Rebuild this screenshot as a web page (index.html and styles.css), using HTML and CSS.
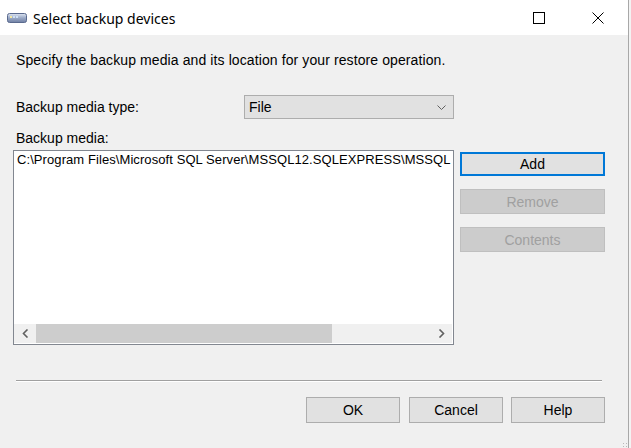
FILE: index.html
```html
<!DOCTYPE html>
<html>
<head>
<meta charset="utf-8">
<link rel="stylesheet" href="styles.css">
</head>
<body>
<div class="screen">
  <div class="dialog">
    <div class="titlebar">
      <svg class="app-icon" width="20" height="10" viewBox="0 0 20 10">
        <defs>
          <linearGradient id="g" x1="0" y1="0" x2="0" y2="1">
            <stop offset="0" stop-color="#dfe6f2"/>
            <stop offset="0.5" stop-color="#9aa9c6"/>
            <stop offset="1" stop-color="#6f7fa3"/>
          </linearGradient>
        </defs>
        <rect x="0.5" y="0.5" width="19" height="9" rx="2" fill="url(#g)" stroke="#5a6a8e"/>
        <rect x="3" y="3" width="2" height="2" fill="#f4e9a0"/>
        <rect x="6" y="3" width="2" height="2" fill="#cfe0f5"/>
        <rect x="9" y="3" width="2" height="2" fill="#cfe0f5"/>
      </svg>
      <span class="title">Select backup devices</span>
      <div class="controls">
        <span class="ctl ctl-max">
          <svg width="12" height="12" viewBox="0 0 12 12"><rect x="0.5" y="0.5" width="11" height="11" fill="none" stroke="#000"/></svg>
        </span>
        <span class="ctl ctl-close">
          <svg width="12" height="12" viewBox="0 0 12 12"><path d="M0.5 0.5 L11.5 11.5 M11.5 0.5 L0.5 11.5" stroke="#000" stroke-width="1"/></svg>
        </span>
      </div>
    </div>
    <div class="content">
      <p class="intro">Specify the backup media and its location for your restore operation.</p>
      <div class="type-row">
        <span class="label">Backup media type:</span>
        <div class="combo">
          <span>File</span>
          <svg width="9" height="5" viewBox="0 0 9 5"><path d="M0.5 0.5 L4.5 4.5 L8.5 0.5" fill="none" stroke="#606060"/></svg>
        </div>
      </div>
      <div class="label media-label">Backup media:</div>
      <div class="media-row">
        <div class="listbox">
          <div class="items">
            <div class="item">C:\Program Files\Microsoft SQL Server\MSSQL12.SQLEXPRESS\MSSQL</div>
          </div>
          <div class="hscroll">
            <span class="arrow">
              <svg width="7" height="9" viewBox="0 0 7 9"><path d="M5.5 0.5 L1.5 4.5 L5.5 8.5" fill="none" stroke="#606060" stroke-width="1.6"/></svg>
            </span>
            <div class="track"><div class="thumb"></div></div>
            <span class="arrow">
              <svg width="7" height="9" viewBox="0 0 7 9"><path d="M1.5 0.5 L5.5 4.5 L1.5 8.5" fill="none" stroke="#606060" stroke-width="1.6"/></svg>
            </span>
          </div>
        </div>
        <div class="side-buttons">
          <button class="btn btn-default">Add</button>
          <button class="btn btn-disabled">Remove</button>
          <button class="btn btn-disabled">Contents</button>
        </div>
      </div>
      <div class="separator"></div>
      <div class="footer">
        <button class="btn btn-foot">OK</button>
        <button class="btn btn-foot btn-cancel">Cancel</button>
        <button class="btn btn-foot">Help</button>
      </div>
      <div class="grip"></div>
    </div>
  </div>
  <div class="edge"></div>
</div>
</body>
</html>
```

FILE: styles.css
```css
html, body {
  margin: 0;
  padding: 0;
}
body {
  width: 631px;
  height: 448px;
  overflow: hidden;
  background: #f0f0f0;
  font-family: "Liberation Sans", Arial, sans-serif;
  font-size: 14px;
  color: #000;
}
.screen {
  display: flex;
  width: 631px;
  height: 448px;
}
.dialog {
  width: 628px;
  height: 448px;
  display: flex;
  flex-direction: column;
  background: #f0f0f0;
}
.edge {
  width: 3px;
  height: 448px;
  border-left: 1px solid #a8a8a8;
  background: #f3f3f3;
  box-sizing: border-box;
}
.titlebar {
  height: 35px;
  background: #fff;
  display: flex;
  align-items: center;
  flex-shrink: 0;
}
.app-icon {
  margin-left: 7px;
}
.title {
  margin-left: 6px;
  font-family: "Noto Sans", "Open Sans", sans-serif;
  font-size: 14px;
  color: #000;
  margin-top: 1px;
}
.controls {
  margin-left: auto;
  display: flex;
  height: 35px;
}
.ctl {
  width: 36px;
  display: flex;
  align-items: center;
  justify-content: center;
}
.ctl-max {
  margin-right: 23px;
}
.ctl-close {
  margin-right: 12px;
}
.content {
  flex: 1;
  position: relative;
  padding: 17px 0 0 16px;
}
.intro {
  margin: 0;
  line-height: 16px;
  height: 16px;
  letter-spacing: 0.1px;
}
.type-row {
  display: flex;
  align-items: center;
  margin-top: 27px;
  height: 24px;
}
.label {
  line-height: 16px;
}
.type-row .label {
  width: 228px;
}
.combo {
  width: 210px;
  height: 24px;
  box-sizing: border-box;
  border: 1px solid #adadad;
  background: #e1e1e1;
  display: flex;
  align-items: center;
  justify-content: space-between;
  padding: 0 7px 0 4px;
}
.media-label {
  margin-top: 11px;
}
.media-row {
  display: flex;
  margin-top: 4px;
  margin-left: -3px;
}
.listbox {
  width: 441px;
  height: 195px;
  box-sizing: border-box;
  border: 1px solid #828790;
  background: #fff;
  display: flex;
  flex-direction: column;
  padding: 0 1px 1px 0;
}
.items {
  flex: 1;
  overflow: hidden;
  padding: 1px 0 0 3px;
}
.item {
  white-space: nowrap;
  line-height: 16px;
  font-size: 13px;
  letter-spacing: 0.08px;
}
.hscroll {
  height: 19px;
  display: flex;
  background: #f0f0f0;
}
.arrow {
  width: 22px;
  display: flex;
  align-items: center;
  justify-content: center;
}
.track {
  flex: 1;
  display: flex;
}
.thumb {
  width: 296px;
  background: #cdcdcd;
}
.side-buttons {
  display: flex;
  flex-direction: column;
  gap: 13px;
  margin-left: 6px;
  margin-top: 2px;
}
.btn {
  font-family: "Liberation Sans", Arial, sans-serif;
  font-size: 14px;
  box-sizing: border-box;
  margin: 0;
  padding: 0;
  line-height: 16px;
  color: #000;
  background: #e1e1e1;
  border: 1px solid #adadad;
  border-radius: 0;
}
.side-buttons .btn {
  width: 145px;
  height: 25px;
}
.side-buttons .btn-default {
  height: 24px;
}
.btn-default {
  border: 2px solid #0078d7;
}
.btn-disabled {
  background: #cccccc;
  border-color: #bfbfbf;
  color: #a0a0a0;
}
.separator {
  margin-top: 35px;
  width: 586px;
  height: 2px;
  border-top: 1px solid #a0a0a0;
  background: #fff;
  box-sizing: border-box;
}
.footer {
  display: flex;
  justify-content: flex-end;
  gap: 8px;
  margin-top: 15px;
  padding-right: 23px;
}
.btn-foot {
  width: 94px;
  height: 26px;
}
.btn-cancel {
  margin-left: 1px;
}
.grip {
  position: absolute;
  right: 1px;
  bottom: 1px;
  width: 5px;
  height: 5px;
  background:
    radial-gradient(circle, #b8b8b8 0.8px, transparent 1px) 0 0 / 3px 3px;
}
```
